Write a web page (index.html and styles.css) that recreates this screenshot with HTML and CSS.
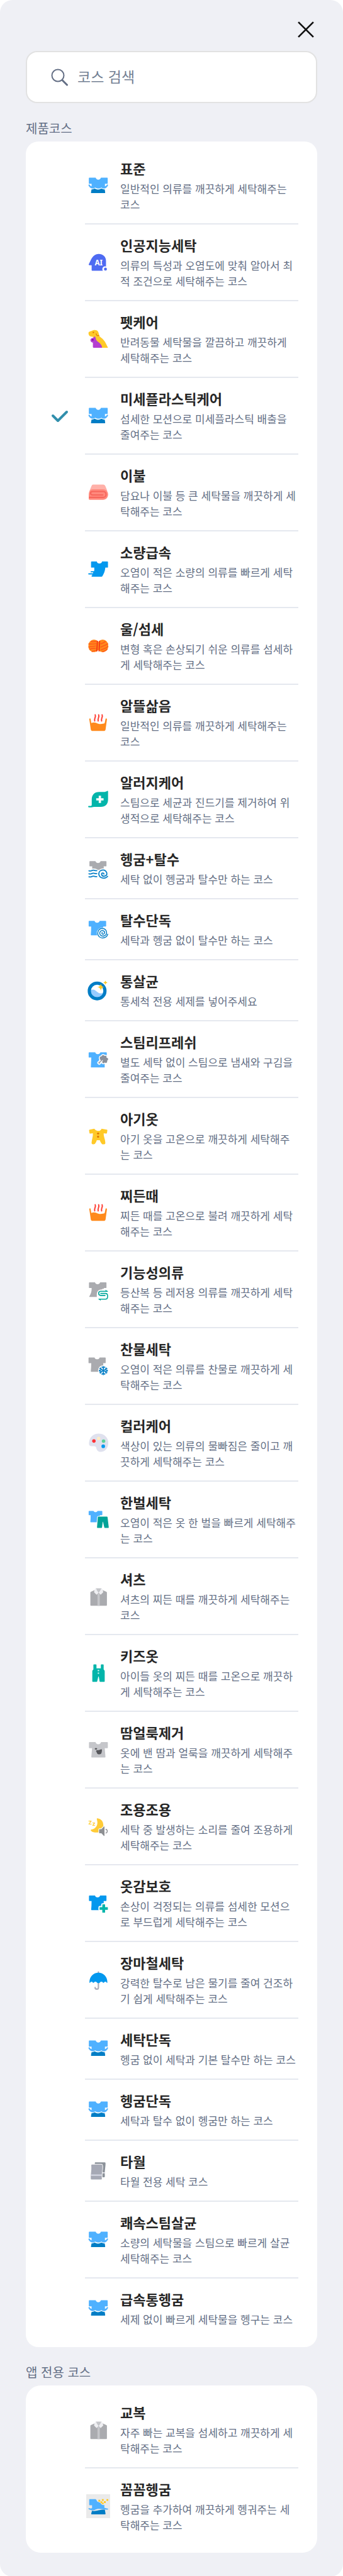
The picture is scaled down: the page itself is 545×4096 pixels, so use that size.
FILE: index.html
```html
<!DOCTYPE html>
<html lang="ko">
<head>
  <meta charset="UTF-8">
  <meta name="viewport" content="width=device-width, initial-scale=1">
  <title>세탁 코스</title>
  <link rel="stylesheet" href="styles.css">
</head>
<body>

  <!-- 아이콘 모음 -->
  <svg class="sprite" aria-hidden="true">
    <symbol id="wash" viewBox="0 0 52 52">
      <path fill="#4fb1ff" d="M7 9h13.500a6 6 0 0 0 11.500 0h13.500q1.200 0 1.200 1.200v11q0 1-1 1h-5v5.500q3-.5 4-3 1-1.600 2.200-.6 1 .8.200 2.400-2.600 5.500-7.600 6-3.500.2-6.500-2.200-6 4.500-13.500 0-3 2.400-6.500 2.200-5-.5-7.800-6-.8-1.600.3-2.400 1.200-1 2.200.6 1.300 2.500 4 3v-5.500h-5q-1 0-1-1v-11q0-1.200 1.200-1.200z"/>
      <path fill="#007dc5" d="M11.500 34.500q3 .3 7-2 7 4.500 14.500 0 4 2.300 7.300 2l1 7q0 1-1 1h-29q-1 0-1-1z"/>
    </symbol>
    <symbol id="ai" viewBox="0 0 52 52">
      <path fill="#4e6bf2" d="M6 29.500C10 22 14 8 27 8c9 0 16 6 16 15v21.400H13q-1.200 0-1.200-1.200V32.500H7.200q-2.800-.6-1.200-3z"/>
      <circle cx="41" cy="41" r="6" fill="#fff"/>
      <circle cx="41.800" cy="41" r="3.200" fill="#4e6bf2"/>
      <text class="ai-text" x="18.500" y="33.500">AI</text>
    </symbol>
    <symbol id="pet" viewBox="0 0 52 52">
      <path fill="#ffc928" d="M5 14c-.6-3.500 3-4.500 6.500-5.500 4-3 13-3.500 15 3l1.700 7c1 3 4.500 4 8.500 8.500 6 6 7 12 10.300 17 .5.700 0 1-.8 1H29L14 21c-4 .5-8.500-1-9-7z"/>
      <path fill="none" stroke="#dd7400" stroke-width="1.600" d="M21.500 14c-.5 4 4 6.500 6.500 3.500"/>
      <circle cx="15.500" cy="11.800" r="1.600" fill="#dd7400"/>
      <path fill="#b43fd0" d="M18.500 20c1 2 2.500 4 2.500 6 .5 3 4 6 7 8 3.500 3 6 6.500 6.500 10.500 0 .4-.3.500-.8.500H16q-1.500 0-1.500-1.500v-9.500c-5.500-1-7-7-3-9.500 2-1 4-.5 5-1.800z"/>
      <circle cx="14.300" cy="27.800" r="1.600" fill="#71008c"/>
    </symbol>
    <symbol id="blanket" viewBox="0 0 52 52">
      <path fill="#ffb1a9" d="M15 9h22q3 0 4.500 3L46 23H7l4.500-11Q12.500 9 15 9z"/>
      <path fill="#ff8a7d" d="M14 19h22.500c7 0 11 5 11 11.500S43 42 36.500 42h-29q-2 0-2-2v-9c0-7 3-12 8.500-12z"/>
      <path fill="none" stroke="#f7665c" stroke-width="2.800" stroke-linecap="round" d="M7.200 36.800H37c8 0 8-12.800 0-12.800H14c-6 0-6 7.400 0 7.400h22"/>
    </symbol>
    <symbol id="quick" viewBox="0 0 52 52">
      <path fill="#0398ee" d="M11.700 9.300h11.200a6 6 0 0 0 11.600 0h11.500q1.300 0 1.300 1.200v11q0 1.200-1.200 1.200h-4.600c-.5 7-3 13-6 18q-1 1.600-2.500 1.600H13q-1.500-.2-1.500-1.400 0-1 1.500-1.200v-2H6q-1.700-.2-1.700-1.300T6 35h9v-2h-4q-1.500-.2-1.500-1.300T11 30.400h6l.5-2v-5.700h-6q-1 0-1-1.200v-11q0-1.200 1.200-1.200z"/>
    </symbol>
    <symbol id="wool" viewBox="0 0 52 52">
      <rect x="4.800" y="12.400" width="24" height="27.200" rx="12" fill="#ff8a1c"/>
      <rect x="23.800" y="12.400" width="24" height="27.200" rx="12" fill="#ff8a1c"/>
      <path fill="none" stroke="#ff5b1a" stroke-width="2.200" d="M10 16c4 2 9 1 13-1M5 22c6-1 12 1 17-1M5 29c6-3 11-1 16-3M7 34c5-4 9-2 14-3M12 39c3-3 6-2 9-3M42 16c-4 4-7 4-11 6M47 21c-5 5-10 4-16 8M48 27c-5 5-10 5-16 8M46 33c-3 4-7 4-11 6"/>
      <path stroke="#f53a12" stroke-width="2.600" stroke-linecap="round" d="M24.300 16l-1.300 21M29.200 16l-1.300 21"/>
    </symbol>
    <symbol id="boil" viewBox="0 0 52 52">
      <path fill="#ff8a1c" d="M7.500 17q1.500-.6 2 1l1.500 9c6-3 10-.5 14 1 6 2 11 1 15-.5l2-9.500q.5-1.600 2-1 1.400.4 1.100 1.800L42 41.500Q41.500 44 39.500 44h-27Q10.500 44 10 41.500L6.700 18.800Q6.500 17.400 7.500 17z"/>
      <path fill="none" stroke="#ff3b30" stroke-width="2.700" stroke-linecap="round" d="M19.500 9c2.500 5-3 8-1 13.500M27 9c2.500 5-3 8-1 13.500M34.500 9c2.500 5-3 8-1 13.500"/>
    </symbol>
    <symbol id="leaf" viewBox="0 0 52 52">
      <path fill="#03b5aa" d="M46 7.600q1.500-.5 1.500 1.200V26c0 11-6 16.500-16 16.500H17L11 43.300H5.500q-1.300-.3-1.300-1.500t1.300-1.300h4.700q1.800-.4 1.800-2.500V27c0-11 6-17 16-17h10c3 0 6-.8 8-2.400z"/>
      <path fill="#fff" d="M27.200 18h5v5.500h5.500v5h-5.500V34h-5v-5.500h-5.500v-5h5.500z"/>
    </symbol>
    <symbol id="rinse-spin" viewBox="0 0 52 52">
      <path fill="#aaabaf" d="M8.200 11.300H20a6 6 0 0 0 11.300 0h11.500q1.200 0 1.200 1.200v9q0 1.200-1.200 1.200H38V30H13v-7.300H8.200Q7 22.700 7 21.500v-9q0-1.200 1.200-1.200z"/>
      <circle cx="36.500" cy="39" r="12" fill="#fff"/>
      <path fill="#fff" d="M4 30q10-5 20-1v18H4z"/>
      <path fill="none" stroke="#0a81c8" stroke-width="2.500" stroke-linecap="round" d="M6 32.300c4 1.600 6-1.300 9.500-1.300 3 0 4 1.300 7.500 1M6 38.800c4 1.600 6-1.300 9.500-1.300 3 0 4 1.300 7.500 1M6 45.300c4 1.600 6-1.300 9.500-1.300 3 0 4 1.300 7.500 1M46.500 44.500c-5 6-17 5-19-4-1.500-10 13-14 17-4 2 8-9 10-11 4-.5-4 5-4.500 5-1"/>
    </symbol>
    <symbol id="spin" viewBox="0 0 52 52">
      <path fill="#4fb1ff" d="M6.500 8.700H18a6 6 0 0 0 11.300 0h12.800q1.200 0 1.200 1.200v10q0 1.100-1.200 1.100H37v19H11q-1.200 0-1-1.200.8-9 .8-17.800H6.500q-1.200 0-1.200-1.100v-10q0-1.200 1.200-1.200z"/>
      <circle cx="35.700" cy="35.700" r="12.800" fill="#fff"/>
      <path fill="none" stroke="#0a81c8" stroke-width="2" stroke-linecap="round" d="M46.800 37.500c-2 8-12 10.500-18 6-7-6-3.500-18.500 6.500-18.500 10 1 12 13 4 16-7 2.500-12.500-4-8.500-9.500 4.500-5 11 0 8.500 4.500-2.500 3.500-7 0-4.500-2.500"/>
    </symbol>
    <symbol id="tub" viewBox="0 0 52 52">
      <circle cx="23.700" cy="28.300" r="17" fill="#fff"/>
      <path fill="#96cbff" d="M9 27c7-4 11 0 15 3.500 5 4 9 4 14 1C36 50 9 47 9 27z"/>
      <circle cx="23.700" cy="28.300" r="17" fill="none" stroke="#007dc5" stroke-width="7"/>
      <path fill="#ffc928" d="M31.700 12.500q1 6.500 7.500 7.500-6.500 1-7.500 7.500-1-6.500-7.500-7.500 6.500-1 7.500-7.500zM41.700 5.800q.6 3.900 4.500 4.500-3.900.6-4.500 4.500-.6-3.900-4.500-4.500 3.900-.6 4.500-4.500z"/>
    </symbol>
    <symbol id="steam" viewBox="0 0 52 52">
      <path fill="#4fb1ff" d="M6.500 11.300h13a6 6 0 0 0 11.300 0h12.700q1.200 0 1.200 1.200v9q0 1.200-1.200 1.200H39.500l.7 20.300q0 1.300-1 1.300h-28q-1.200 0-1.100-1.200l1-20.400H6.500q-1.200 0-1.200-1.200v-9q0-1.200 1.200-1.200z"/>
      <path fill="#8a8f99" stroke="#fff" stroke-width="2" d="M33 19c1-4 6-3.500 7-1 3-1 6 1 5 4 4 1 5 6 1.500 8 1 4-3 7-6 4.500-3 3-7 1.500-6.500-2l-5 5q-3 0-2.500-2.500l-1 .5q-1.500-1.500.5-3.500l4-4c-3-3-2-9 3-9z"/>
      <path stroke="#fff" stroke-width="1.500" stroke-linecap="round" d="M29.500 35l6-6M28.500 31.500l2.500-2.500"/>
    </symbol>
    <symbol id="baby" viewBox="0 0 52 52">
      <path fill="#ffc928" d="M17.500 10.600q4 5.500 8.500 4.500 4.500 1 7.500-4.500l11.500 2q1.200.4 1 1.600l-1 6q-.4 1.300-1.600 1.100L38 20.500c-.5 7 3.500 13 3.600 21.500q-.2 2.500-2.800 2.500-3.800.6-5.300-1.500-2.500-3-4-7.500h-6.500q-1.500 5-4 8-2 1.500-4.800 1-2.700-.2-2.600-3C12 34 15 28 14.500 20.500l-5.800.8q-1.300.2-1.600-1.100l-.9-5.800q-.2-1.300 1-1.600z"/>
      <circle cx="25.800" cy="21" r="2.200" fill="#dd7400"/>
      <circle cx="25.800" cy="28" r="2.200" fill="#dd7400"/>
    </symbol>
    <symbol id="outdoor" viewBox="0 0 52 52">
      <path fill="#aaabaf" d="M7.200 11H19a6 6 0 0 0 11.300 0h12.500q1.200 0 1.200 1.200v10q0 1.200-1.200 1.200H38.500V42.700H7.500q-1.500-.2-.7-1.400C11 35 12 30 11.800 23.400H7.200Q6 23.400 6 22.200v-10Q6 11 7.200 11z"/>
      <path fill="#fff" d="M23 51V36q1-10 12-9.500V25H50v26z"/>
      <path fill="none" stroke="#00a79b" stroke-width="2.200" stroke-linecap="round" d="M46 30.500H31.500c-6 0-6 9 0 9H41M31.500 35H42c6 0 6 12.500 0 12.500H28"/>
      <path fill="#00a79b" d="M42 27l5.500 4.500H42zM31.500 51L26 46.500h5.500z"/>
    </symbol>
    <symbol id="cold" viewBox="0 0 52 52">
      <path fill="#aaabaf" d="M6.200 7.400H18a6 6 0 0 0 11.300 0h11.800q1.200 0 1.200 1.200v10q0 1.300-1.200 1.300H37v8q-9 1-10 10.600H11q-1.200 0-1-1.200.9-9 .9-17.300H6.200Q5 20 5 18.700v-10q0-1.300 1.200-1.300z"/>
      <circle cx="37.300" cy="36" r="11.500" fill="#fff"/>
      <path fill="none" stroke="#0a81c8" stroke-width="2.200" stroke-linecap="round" d="M37.300 27v18M29.500 31.500l15.600 9M29.500 40.500l15.600-9M34.300 28l3 3 3-3M34.300 44l3-3 3 3M28.600 35.200l4.100-1-1.100-4M43 41.800l-1.100-4 4.100-1M28.600 36.800l4.100 1-1.100 4M43 30.200l-1.100 4 4.100 1"/>
    </symbol>
    <symbol id="palette" viewBox="0 0 52 52">
      <path fill="#dfe1ee" d="M27 6.300c12 0 21 9 21 20S41 46 31.500 46c-5 0-8.500-3-9.500-8-.5-3-2-4.500-5-4.500h-5c-4 0-6-2-6-5.500C6 15 15 6.300 27 6.300z"/>
      <circle cx="16.700" cy="22.400" r="3.800" fill="#ff3236"/>
      <circle cx="27" cy="16.700" r="3.700" fill="#ffecc5"/>
      <circle cx="37.700" cy="22.700" r="3.800" fill="#5fd39a"/>
      <circle cx="37" cy="33.800" r="3.900" fill="#0398ee"/>
    </symbol>
    <symbol id="pair" viewBox="0 0 52 52">
      <path fill="#4fb1ff" d="M6.300 7.400h9.500a5 5 0 0 0 9 0h9.200q1 0 1 1v7.200q0 1-1 1h-4L24 32H10q-1 0-1-1 .7-7 .6-14.400H6.300q-1 0-1-1V8.400q0-1 1-1z"/>
      <path fill="#00a398" stroke="#fff" stroke-width="3" paint-order="stroke" d="M26.500 20h18.600q1.100 0 1.300 1.100l2.600 22q.1 1.300-1 1.300h-7.500q-1 0-1.200-1L36.500 31h-.6l-1.500 12.500q-.2 1-1.200 1h-8.700q-1.100 0-1-1.300l1.700-22q.2-1.200 1.300-1.200z"/>
    </symbol>
    <symbol id="shirt" viewBox="0 0 52 52">
      <path fill="#aaabaf" d="M9 18.500q0-1.500 1.300-2L20 12h14l9.700 4.500q1.300.5 1.300 2v27q0 1.500-1.500 1.500h-33Q9 47 9 45.500z"/>
      <path fill="#c5c6ca" d="M24.500 20h5v27h-5z"/>
      <path fill="#c5c6ca" d="M20.500 9h13L27 18z"/>
      <path fill="#efeff2" d="M20.500 9l6.500 9.500-4.500 4.300-5.500-5.300q.5-6 3.500-8.500zM33.500 9L27 18.500l4.500 4.300L37 17.500Q36.500 11.500 33.500 9z"/>
    </symbol>
    <symbol id="kids" viewBox="0 0 52 52">
      <path fill="#03b5aa" d="M17 7.400h4q1.300 0 1.300 1.300V16h9.500V8.700q0-1.300 1.300-1.300h3.500q1.300 0 1.300 1.300v9.800l1.400 1.800q.9 1 .9 2.500v21.500q0 1.300-1.300 1.300h-8.500q-1.300 0-1.400-1.300L27.300 34h-1L24 44.300q-.2 1.300-1.500 1.300h-8q-1.300 0-1.300-1.300V22.800q0-1.500.9-2.500l1.500-1.800V8.700q0-1.300 1.400-1.300z"/>
      <circle cx="26.500" cy="21" r="1.700" fill="#b9f0ea"/>
      <circle cx="26.500" cy="26.600" r="1.700" fill="#b9f0ea"/>
    </symbol>
    <symbol id="stain" viewBox="0 0 52 52">
      <path fill="#c5c6ca" d="M7.200 9.600h13a6.200 6.200 0 0 0 12 0h13.600q1.200 0 1.200 1.200v10.800q0 1.200-1.200 1.200h-5.500l1.500 18.900q0 1.300-1.200 1.300H12.300q-1.300 0-1.200-1.300l1.600-18.900H7.200Q6 22.800 6 21.600V10.800q0-1.200 1.200-1.200z"/>
      <path fill="#56575b" d="M31.500 25.500q2.500-1.500 2.700 2-.2 5-1.700 7.500-3 2-7 .8-2.500-1-3-4.500-2.500-3 .3-4 5 0 8.700-1.800z"/>
      <ellipse cx="21.200" cy="24.300" rx="2.600" ry="1.700" fill="#56575b"/>
    </symbol>
    <symbol id="quiet" viewBox="0 0 52 52">
      <path fill="#ffcb37" d="M23 10.500q-.5-2.300 2-2 12 2.500 12.300 15c0 9-6 16-15 16-5 0-9-1-12-4q-1.500-2 .8-2.500C22 31 27 22 23 10.500z"/>
      <text class="zz-text" x="5" y="21.500">Z</text>
      <text class="zz-text small" x="13.500" y="25">z</text>
      <path fill="#8e9093" stroke="#fff" stroke-width="3" paint-order="stroke" d="M29 32h4l5.500-5.500q1.200-.8 1.200.6v19q0 1.400-1.200.6L33 41h-4q-1 0-1-1v-7q0-1 1-1z"/>
      <path fill="none" stroke="#8e9093" stroke-width="1.800" stroke-linecap="round" d="M42.800 32.500c4 1 4 7 0 8"/>
    </symbol>
    <symbol id="protect" viewBox="0 0 52 52">
      <path fill="#0398ee" d="M7.200 9.600H19a6 6 0 0 0 11.300 0h12.500q1.200 0 1.200 1.200v9.400q0 1.200-1.200 1.200H38V41.300H12q-1.300 0-1.200-1.300.9-9 .8-18.600H7.200Q6 21.400 6 20.200v-9.400q0-1.200 1.200-1.200z"/>
      <path fill="#03b5aa" stroke="#fff" stroke-width="5" paint-order="stroke" d="M35 29.500q0-.8.800-.8h4.400q.8 0 .8.800v5.300h5.200q.8 0 .8.800v4.400q0 .8-.8.800H41v5.400q0 .8-.8.800h-4.400q-.8 0-.8-.8v-5.400h-5.200q-.8 0-.8-.8v-4.400q0-.8.800-.8H35z"/>
    </symbol>
    <symbol id="umbrella" viewBox="0 0 52 52">
      <path fill="none" stroke="#aaacb8" stroke-width="3" stroke-linecap="round" d="M26.500 9v2M26.500 32v11c0 4.500-7 4.500-7.200 0"/>
      <path fill="#0398ee" d="M7 31.500C7 19 15.500 10.700 26.500 10.700S46 19 46 31.500q0 2-1.500.5-3-4-6 0-1 1.300-2 0-3.500-4-7 0-3 2.500-6 0-3.500-4-7 0-1 1.300-2 0-3-4-6 0Q7 33.500 7 31.500z"/>
    </symbol>
    <symbol id="towel" viewBox="0 0 52 52">
      <path fill="#8c929a" d="M19 8.500h21q2 0 2 2c0 9-2 13-1.500 29q0 1.500-1.500 1.500h-4c-1-10 2-18 1-26q-.5-3-3-3H18.500q.3-2 .5-3.500z"/>
      <path fill="#e3e4ea" d="M35 30h6v2.500h-6z"/>
      <path fill="#a6a9b5" stroke="#fff" stroke-width="2" paint-order="stroke" d="M12.500 13.400H33q2 0 2 2c1 9-2 18-1 29q0 1.300-1.300 1.300H11.500Q10 45.600 10 44c-.5-11 2-17 1-29q0-1.500 1.500-1.600z"/>
      <path fill="#d9dbe6" d="M10 35h24v2.800H10z"/>
    </symbol>
    <symbol id="rinse-plus" viewBox="0 0 52 52">
      <path fill="#eaeaea" d="M0 0h52v52H0z"/>
      <path fill="#4fb1ff" d="M7.500 10.500H20q1 0 1.500 1l3 5q6 1 8 5 3 2.500 7 2v6q4 1 7 1.500 2 .3 1.300 1.500-.8 1.300-3 1C34 33 26 29.500 18 34.500c-4 1-9 .5-12.500-2q-1.300-1.200-.3-2.200.8-.8 3 .5 3 .5 4.500-.8v-6H7.500q-1 0-1-1V11.500q0-1 1-1z"/>
      <path fill="#007dc5" d="M12.500 36C22 38 27 33 40.500 33.500l1.500 9q0 1.300-1 1.300H12q-1.200 0-1.200-1.300z"/>
      <path fill="#ffc928" d="M26.500 12h4v4h-4zM34 10.500h4v4h-4zM31 15.500h4v4h-4zM38.500 15h4v4h-4zM44 10.500h4v4h-4zM34 18.500h4v3h-4z"/>
    </symbol>
  </svg>

  <main class="sheet">
    <div class="top">
      <button type="button" class="close" aria-label="닫기">
        <svg viewBox="0 0 24 24" aria-hidden="true"><path d="M1 1l22 22M23 1L1 23"/></svg>
      </button>
    </div>

    <!-- 검색 -->
    <label class="search">
      <svg viewBox="0 0 28 28" aria-hidden="true"><circle cx="11" cy="11" r="9.500"/><path class="grip" d="M18 18.500l7.500 7.500"/></svg>
      <input type="search" placeholder="코스 검색" aria-label="코스 검색">
    </label>

    <!-- 제품코스 -->
    <h2>제품코스</h2>
    <div class="card">
      <label class="course">
        <input type="radio" name="course">
        <span class="info"><svg class="icon"><use href="#wash"/></svg>
          <span class="text"><strong>표준</strong><span class="desc">일반적인 의류를 깨끗하게 세탁해주는 코스</span></span></span>
      </label>
      <label class="course">
        <input type="radio" name="course">
        <span class="info"><svg class="icon"><use href="#ai"/></svg>
          <span class="text"><strong>인공지능세탁</strong><span class="desc">의류의 특성과 오염도에 맞춰 알아서 최적 조건으로 세탁해주는 코스</span></span></span>
      </label>
      <label class="course">
        <input type="radio" name="course">
        <span class="info"><svg class="icon"><use href="#pet"/></svg>
          <span class="text"><strong>펫케어</strong><span class="desc">반려동물 세탁물을 깔끔하고 깨끗하게 세탁해주는 코스</span></span></span>
      </label>
      <label class="course">
        <input type="radio" name="course" checked>
        <span class="info"><svg class="icon"><use href="#wash"/></svg>
          <span class="text"><strong>미세플라스틱케어</strong><span class="desc">섬세한 모션으로 미세플라스틱 배출을 줄여주는 코스</span></span></span>
      </label>
      <label class="course">
        <input type="radio" name="course">
        <span class="info"><svg class="icon"><use href="#blanket"/></svg>
          <span class="text"><strong>이불</strong><span class="desc">담요나 이불 등 큰 세탁물을 깨끗하게 세탁해주는 코스</span></span></span>
      </label>
      <label class="course">
        <input type="radio" name="course">
        <span class="info"><svg class="icon"><use href="#quick"/></svg>
          <span class="text"><strong>소량급속</strong><span class="desc">오염이 적은 소량의 의류를 빠르게 세탁해주는 코스</span></span></span>
      </label>
      <label class="course">
        <input type="radio" name="course">
        <span class="info"><svg class="icon"><use href="#wool"/></svg>
          <span class="text"><strong>울/섬세</strong><span class="desc">변형 혹은 손상되기 쉬운 의류를 섬세하게 세탁해주는 코스</span></span></span>
      </label>
      <label class="course">
        <input type="radio" name="course">
        <span class="info"><svg class="icon"><use href="#boil"/></svg>
          <span class="text"><strong>알뜰삶음</strong><span class="desc">일반적인 의류를 깨끗하게 세탁해주는 코스</span></span></span>
      </label>
      <label class="course">
        <input type="radio" name="course">
        <span class="info"><svg class="icon"><use href="#leaf"/></svg>
          <span class="text"><strong>알러지케어</strong><span class="desc">스팀으로 세균과 진드기를 제거하여 위생적으로 세탁해주는 코스</span></span></span>
      </label>
      <label class="course">
        <input type="radio" name="course">
        <span class="info"><svg class="icon"><use href="#rinse-spin"/></svg>
          <span class="text"><strong>헹굼+탈수</strong><span class="desc">세탁 없이 헹굼과 탈수만 하는 코스</span></span></span>
      </label>
      <label class="course">
        <input type="radio" name="course">
        <span class="info"><svg class="icon"><use href="#spin"/></svg>
          <span class="text"><strong>탈수단독</strong><span class="desc">세탁과 헹굼 없이 탈수만 하는 코스</span></span></span>
      </label>
      <label class="course">
        <input type="radio" name="course">
        <span class="info"><svg class="icon"><use href="#tub"/></svg>
          <span class="text"><strong>통살균</strong><span class="desc">통세척 전용 세제를 넣어주세요</span></span></span>
      </label>
      <label class="course">
        <input type="radio" name="course">
        <span class="info"><svg class="icon"><use href="#steam"/></svg>
          <span class="text"><strong>스팀리프레쉬</strong><span class="desc">별도 세탁 없이 스팀으로 냄새와 구김을 줄여주는 코스</span></span></span>
      </label>
      <label class="course">
        <input type="radio" name="course">
        <span class="info"><svg class="icon"><use href="#baby"/></svg>
          <span class="text"><strong>아기옷</strong><span class="desc">아기 옷을 고온으로 깨끗하게 세탁해주는 코스</span></span></span>
      </label>
      <label class="course">
        <input type="radio" name="course">
        <span class="info"><svg class="icon"><use href="#boil"/></svg>
          <span class="text"><strong>찌든때</strong><span class="desc">찌든 때를 고온으로 불려 깨끗하게 세탁해주는 코스</span></span></span>
      </label>
      <label class="course">
        <input type="radio" name="course">
        <span class="info"><svg class="icon"><use href="#outdoor"/></svg>
          <span class="text"><strong>기능성의류</strong><span class="desc">등산복 등 레저용 의류를 깨끗하게 세탁해주는 코스</span></span></span>
      </label>
      <label class="course">
        <input type="radio" name="course">
        <span class="info"><svg class="icon"><use href="#cold"/></svg>
          <span class="text"><strong>찬물세탁</strong><span class="desc">오염이 적은 의류를 찬물로 깨끗하게 세탁해주는 코스</span></span></span>
      </label>
      <label class="course">
        <input type="radio" name="course">
        <span class="info"><svg class="icon"><use href="#palette"/></svg>
          <span class="text"><strong>컬러케어</strong><span class="desc">색상이 있는 의류의 물빠짐은 줄이고 깨끗하게 세탁해주는 코스</span></span></span>
      </label>
      <label class="course">
        <input type="radio" name="course">
        <span class="info"><svg class="icon"><use href="#pair"/></svg>
          <span class="text"><strong>한벌세탁</strong><span class="desc">오염이 적은 옷 한 벌을 빠르게 세탁해주는 코스</span></span></span>
      </label>
      <label class="course">
        <input type="radio" name="course">
        <span class="info"><svg class="icon"><use href="#shirt"/></svg>
          <span class="text"><strong>셔츠</strong><span class="desc">셔츠의 찌든 때를 깨끗하게 세탁해주는 코스</span></span></span>
      </label>
      <label class="course">
        <input type="radio" name="course">
        <span class="info"><svg class="icon"><use href="#kids"/></svg>
          <span class="text"><strong>키즈옷</strong><span class="desc">아이들 옷의 찌든 때를 고온으로 깨끗하게 세탁해주는 코스</span></span></span>
      </label>
      <label class="course">
        <input type="radio" name="course">
        <span class="info"><svg class="icon"><use href="#stain"/></svg>
          <span class="text"><strong>땀얼룩제거</strong><span class="desc">옷에 밴 땀과 얼룩을 깨끗하게 세탁해주는 코스</span></span></span>
      </label>
      <label class="course">
        <input type="radio" name="course">
        <span class="info"><svg class="icon"><use href="#quiet"/></svg>
          <span class="text"><strong>조용조용</strong><span class="desc">세탁 중 발생하는 소리를 줄여 조용하게 세탁해주는 코스</span></span></span>
      </label>
      <label class="course">
        <input type="radio" name="course">
        <span class="info"><svg class="icon"><use href="#protect"/></svg>
          <span class="text"><strong>옷감보호</strong><span class="desc">손상이 걱정되는 의류를 섬세한 모션으로 부드럽게 세탁해주는 코스</span></span></span>
      </label>
      <label class="course">
        <input type="radio" name="course">
        <span class="info"><svg class="icon"><use href="#umbrella"/></svg>
          <span class="text"><strong>장마철세탁</strong><span class="desc">강력한 탈수로 남은 물기를 줄여 건조하기 쉽게 세탁해주는 코스</span></span></span>
      </label>
      <label class="course">
        <input type="radio" name="course">
        <span class="info"><svg class="icon"><use href="#wash"/></svg>
          <span class="text"><strong>세탁단독</strong><span class="desc">헹굼 없이 세탁과 기본 탈수만 하는 코스</span></span></span>
      </label>
      <label class="course">
        <input type="radio" name="course">
        <span class="info"><svg class="icon"><use href="#wash"/></svg>
          <span class="text"><strong>헹굼단독</strong><span class="desc">세탁과 탈수 없이 헹굼만 하는 코스</span></span></span>
      </label>
      <label class="course">
        <input type="radio" name="course">
        <span class="info"><svg class="icon"><use href="#towel"/></svg>
          <span class="text"><strong>타월</strong><span class="desc">타월 전용 세탁 코스</span></span></span>
      </label>
      <label class="course">
        <input type="radio" name="course">
        <span class="info"><svg class="icon"><use href="#wash"/></svg>
          <span class="text"><strong>쾌속스팀살균</strong><span class="desc">소량의 세탁물을 스팀으로 빠르게 살균 세탁해주는 코스</span></span></span>
      </label>
      <label class="course">
        <input type="radio" name="course">
        <span class="info"><svg class="icon"><use href="#wash"/></svg>
          <span class="text"><strong>급속통헹굼</strong><span class="desc">세제 없이 빠르게 세탁물을 헹구는 코스</span></span></span>
      </label>
    </div>

    <!-- 앱 전용 코스 -->
    <h2>앱 전용 코스</h2>
    <div class="card app">
      <label class="course">
        <input type="radio" name="course">
        <span class="info"><svg class="icon"><use href="#shirt"/></svg>
          <span class="text"><strong>교복</strong><span class="desc">자주 빠는 교복을 섬세하고 깨끗하게 세탁해주는 코스</span></span></span>
      </label>
      <label class="course">
        <input type="radio" name="course">
        <span class="info"><svg class="icon"><use href="#rinse-plus"/></svg>
          <span class="text"><strong>꼼꼼헹굼</strong><span class="desc">헹굼을 추가하여 깨끗하게 헹궈주는 세탁해주는 코스</span></span></span>
      </label>
    </div>
  </main>

</body>
</html>
```
FILE: styles.css
```css
* {
  box-sizing: border-box;
}

body {
  margin: 0;
  background: #fff;
  font-family: "Noto Sans CJK KR", sans-serif;
  color: #262626;
}

.sprite {
  display: none;
}

.sheet {
  padding: 34px 41px 38px;
  background: #eff0f5;
  border-radius: 20px;
}

.top {
  display: flex;
  justify-content: flex-end;
  padding-right: 5px;
}

.close {
  width: 26px;
  height: 26px;
  padding: 0;
  border: 0;
  background: none;
}

.close svg {
  display: block;
  width: 26px;
  height: 26px;
  fill: none;
  stroke: #111;
  stroke-width: 2.5;
}

/* 검색창 */
.search {
  display: flex;
  align-items: center;
  gap: 14px;
  height: 83px;
  margin-top: 21px;
  padding: 0 38px;
  border: 2px solid #e2e2e2;
  border-radius: 18px;
  background: #fff;
}

.search svg {
  width: 28px;
  height: 28px;
  fill: none;
  stroke: #646f85;
  stroke-width: 2;
}

.search .grip {
  stroke-width: 3;
  stroke-linecap: round;
}

.search input {
  flex: 1;
  min-width: 0;
  padding: 0 0 3px;
  border: 0;
  outline: 0;
  background: none;
  font: inherit;
  font-size: 23px;
}

.search input::placeholder {
  color: #737f93;
}

h2 {
  margin: 25px 0 6px;
  font-size: 20px;
  font-weight: 400;
  line-height: 30px;
  color: #646f85;
}

/* 코스 목록 */
.card {
  padding: 10px 30px 12px 0;
  border-radius: 20px;
  background: #fff;
}

.card.app {
  border-radius: 24px;
}

.course {
  display: grid;
  grid-template-columns: 94px 1fr;
}

.course input {
  appearance: none;
  align-self: center;
  justify-self: center;
  width: 28px;
  height: 28px;
  margin: 0 0 0 14px;
}

.course input:checked {
  background: url('data:image/svg+xml,<svg xmlns="http://www.w3.org/2000/svg" viewBox="0 0 28 28"><path d="M3 13l8 8L25 7" fill="none" stroke="%23318fac" stroke-width="4" stroke-linecap="round" stroke-linejoin="round"/></svg>') no-repeat;
}

.info {
  display: flex;
  align-items: center;
  gap: 16px;
  padding: 17px 0 18px 2px;
  border-bottom: 2px solid #e5e8ef;
}

.course:last-child .info {
  border-color: transparent;
}

.icon {
  flex: none;
  width: 38px;
  height: 38px;
}

.text {
  flex: 1;
}

.text strong {
  display: block;
  margin-bottom: 5px;
  font-size: 22px;
  font-weight: 600;
  line-height: 30px;
}

.desc {
  display: block;
  font-size: 17px;
  line-height: 25px;
  color: #646f85;
  word-break: break-all;
}

.ai-text {
  font: bold 16px "Noto Sans", sans-serif;
  fill: #fff;
}

.zz-text {
  font: bold 12px "Noto Sans", sans-serif;
  fill: #ffcb37;
}

.zz-text.small {
  font-size: 13px;
}
```
